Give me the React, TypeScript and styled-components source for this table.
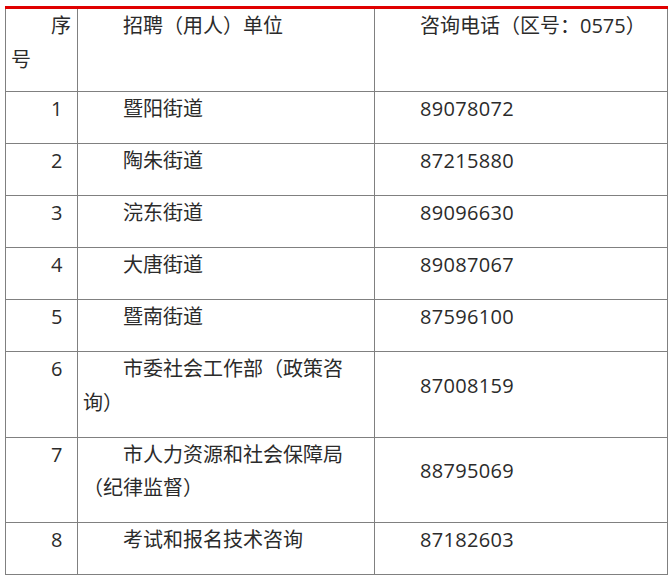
import React from "react";
import styled, { createGlobalStyle } from "styled-components";

const GlobalStyle = createGlobalStyle`
  html, body {
    margin: 0;
    padding: 0;
    background: #fff;
  }
  body {
    font-family: "Open Sans", "Noto Sans CJK SC", sans-serif;
    color: #2b2b2b;
  }
`;

type Row = {
  no: string;
  unit: string;
  phone: string;
};

const rows: Row[] = [
  { no: "1", unit: "暨阳街道", phone: "89078072" },
  { no: "2", unit: "陶朱街道", phone: "87215880" },
  { no: "3", unit: "浣东街道", phone: "89096630" },
  { no: "4", unit: "大唐街道", phone: "89087067" },
  { no: "5", unit: "暨南街道", phone: "87596100" },
  { no: "6", unit: "市委社会工作部（政策咨询）", phone: "87008159" },
  { no: "7", unit: "市人力资源和社会保障局（纪律监督）", phone: "88795069" },
  { no: "8", unit: "考试和报名技术咨询", phone: "87182603" },
];

export default function App() {
  return (
    <>
      <GlobalStyle />
      <Wrapper>
        <Table>
          <colgroup>
            <col style={{ width: 72 }} />
            <col style={{ width: 297 }} />
            <col style={{ width: 293 }} />
          </colgroup>
          <thead>
            <tr>
              <HeadCell>序号</HeadCell>
              <HeadCell>招聘（用人）单位</HeadCell>
              <HeadCell>咨询电话（区号：0575）</HeadCell>
            </tr>
          </thead>
          <tbody>
            {rows.map((r) => (
              <tr key={r.no}>
                <Cell>{r.no}</Cell>
                <Cell>{r.unit}</Cell>
                <Cell $middle>
                  <Phone>{r.phone}</Phone>
                </Cell>
              </tr>
            ))}
          </tbody>
        </Table>
      </Wrapper>
    </>
  );
}

const Wrapper = styled.div`
  padding: 6px 5px 4px 5px;
`;

const Table = styled.table`
  width: 662px;
  table-layout: fixed;
  border-collapse: collapse;
  font-size: 20px;
  line-height: 33.5px;
`;

const HeadCell = styled.th`
  border: 1px solid #808080;
  border-top: 3px solid #e00000;
  padding: 0 5px 15px 5px;
  text-indent: 40px;
  text-align: left;
  vertical-align: top;
  font-weight: 400;
`;

const Cell = styled.td<{ $middle?: boolean }>`
  border: 1px solid #808080;
  padding: 0 5px 17.5px 5px;
  text-indent: 40px;
  vertical-align: ${(p) => (p.$middle ? "middle" : "top")};
`;

const Phone = styled.span`
  letter-spacing: 0.3px;
`;
